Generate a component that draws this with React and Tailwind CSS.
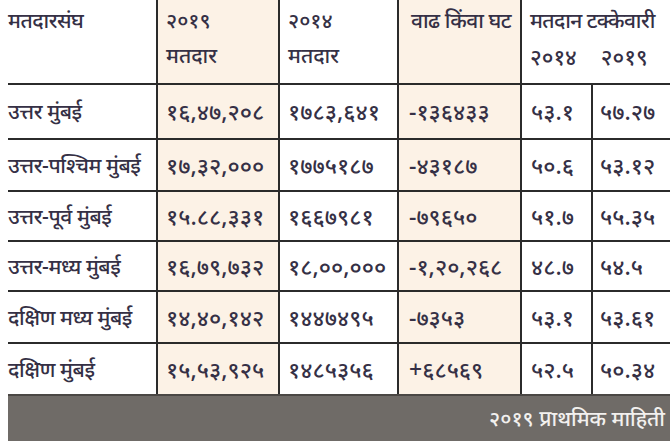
import React from 'react';

const rows = [
  ['उत्तर मुंबई', '१६,४७,२०८', '१७८३,६४१', '-१३६४३३', '५३.१', '५७.२७'],
  ['उत्तर-पश्चिम मुंबई', '१७,३२,०००', '१७७५१८७', '-४३१८७', '५०.६', '५३.१२'],
  ['उत्तर-पूर्व मुंबई', '१५.८८,३३१', '१६६७९८१', '-७९६५०', '५१.७', '५५.३५'],
  ['उत्तर-मध्य मुंबई', '१६,७९,७३२', '१८,००,०००', '-१,२०,२६८', '४८.७', '५४.५'],
  ['दक्षिण मध्य मुंबई', '१४,४०,१४२', '१४४७४९५', '-७३५३', '५३.१', '५३.६१'],
  ['दक्षिण मुंबई', '१५,५३,९२५', '१४८५३५६', '+६८५६९', '५२.५', '५०.३४'],
];

const heights = ['h-[55px]', 'h-[52px]', 'h-[50px]', 'h-[50px]', 'h-[52px]', 'h-[52px]'];

const App = () => {
  return (
    <div className="w-[670px] h-[441px] overflow-hidden bg-white pl-2 text-[#353045] font-['Noto_Sans',sans-serif] font-medium text-[21px] leading-none">
      {/* Header */}
      <div className="grid grid-cols-[148px_122px_119px_123px_150px] h-[83px] mr-[3px]">
        <div className="pt-[10px] tracking-[-0.5px]">मतदारसंघ</div>
        <div className="bg-[#fcf2e6] border-l-2 border-[#2b2b2b] pl-[8px] pt-[10px] flex flex-col gap-[14px]">
          <span>२०१९</span>
          <span>मतदार</span>
        </div>
        <div className="border-l-2 border-[#2b2b2b] pl-[8px] pt-[10px] flex flex-col gap-[14px]">
          <span>२०१४</span>
          <span>मतदार</span>
        </div>
        <div className="bg-[#fcf2e6] border-l-2 border-[#2b2b2b] pl-[12px] pt-[10px] whitespace-nowrap tracking-[-0.5px]">वाढ किंवा घट</div>
        <div className="border-l-2 border-[#2b2b2b] pl-[8px] pt-[10px] flex flex-col gap-[14px]">
          <span className="whitespace-nowrap tracking-[-0.6px]">मतदान टक्केवारी</span>
          <div className="flex gap-[24px] text-[22px]">
            <span>२०१४</span>
            <span>२०१९</span>
          </div>
        </div>
      </div>

      {/* Rows */}
      {rows.map((r, i) => (
        <div
          key={i}
          className={`grid grid-cols-[148px_122px_119px_123px_71px_79px] border-t-2 border-[#2b2b2b] text-[23px] ${heights[i]}`}
        >
          <div className="flex items-center whitespace-nowrap tracking-[-0.4px] text-[21px]">{r[0]}</div>
          <div className="flex items-center bg-[#fcf2e6] border-l-2 border-[#2b2b2b] pl-[8px] whitespace-nowrap">{r[1]}</div>
          <div className="flex items-center border-l-2 border-[#2b2b2b] pl-[8px] whitespace-nowrap">{r[2]}</div>
          <div className="flex items-center bg-[#fcf2e6] border-l-2 border-[#2b2b2b] pl-[10px] whitespace-nowrap">{r[3]}</div>
          <div className="flex items-center border-l-2 border-[#2b2b2b] pl-[9px] whitespace-nowrap">{r[4]}</div>
          <div className="flex items-center border-l-2 border-[#2b2b2b] pl-[7px] whitespace-nowrap">{r[5]}</div>
        </div>
      ))}

      {/* Footer */}
      <div className="h-[47px] bg-[#6f6b67] border-t-2 border-[#4a4744] flex items-center justify-end pr-[5px] text-[#f2f0ee] text-[21px]">
        २०१९ प्राथमिक माहिती
      </div>
    </div>
  );
};

export default App;
